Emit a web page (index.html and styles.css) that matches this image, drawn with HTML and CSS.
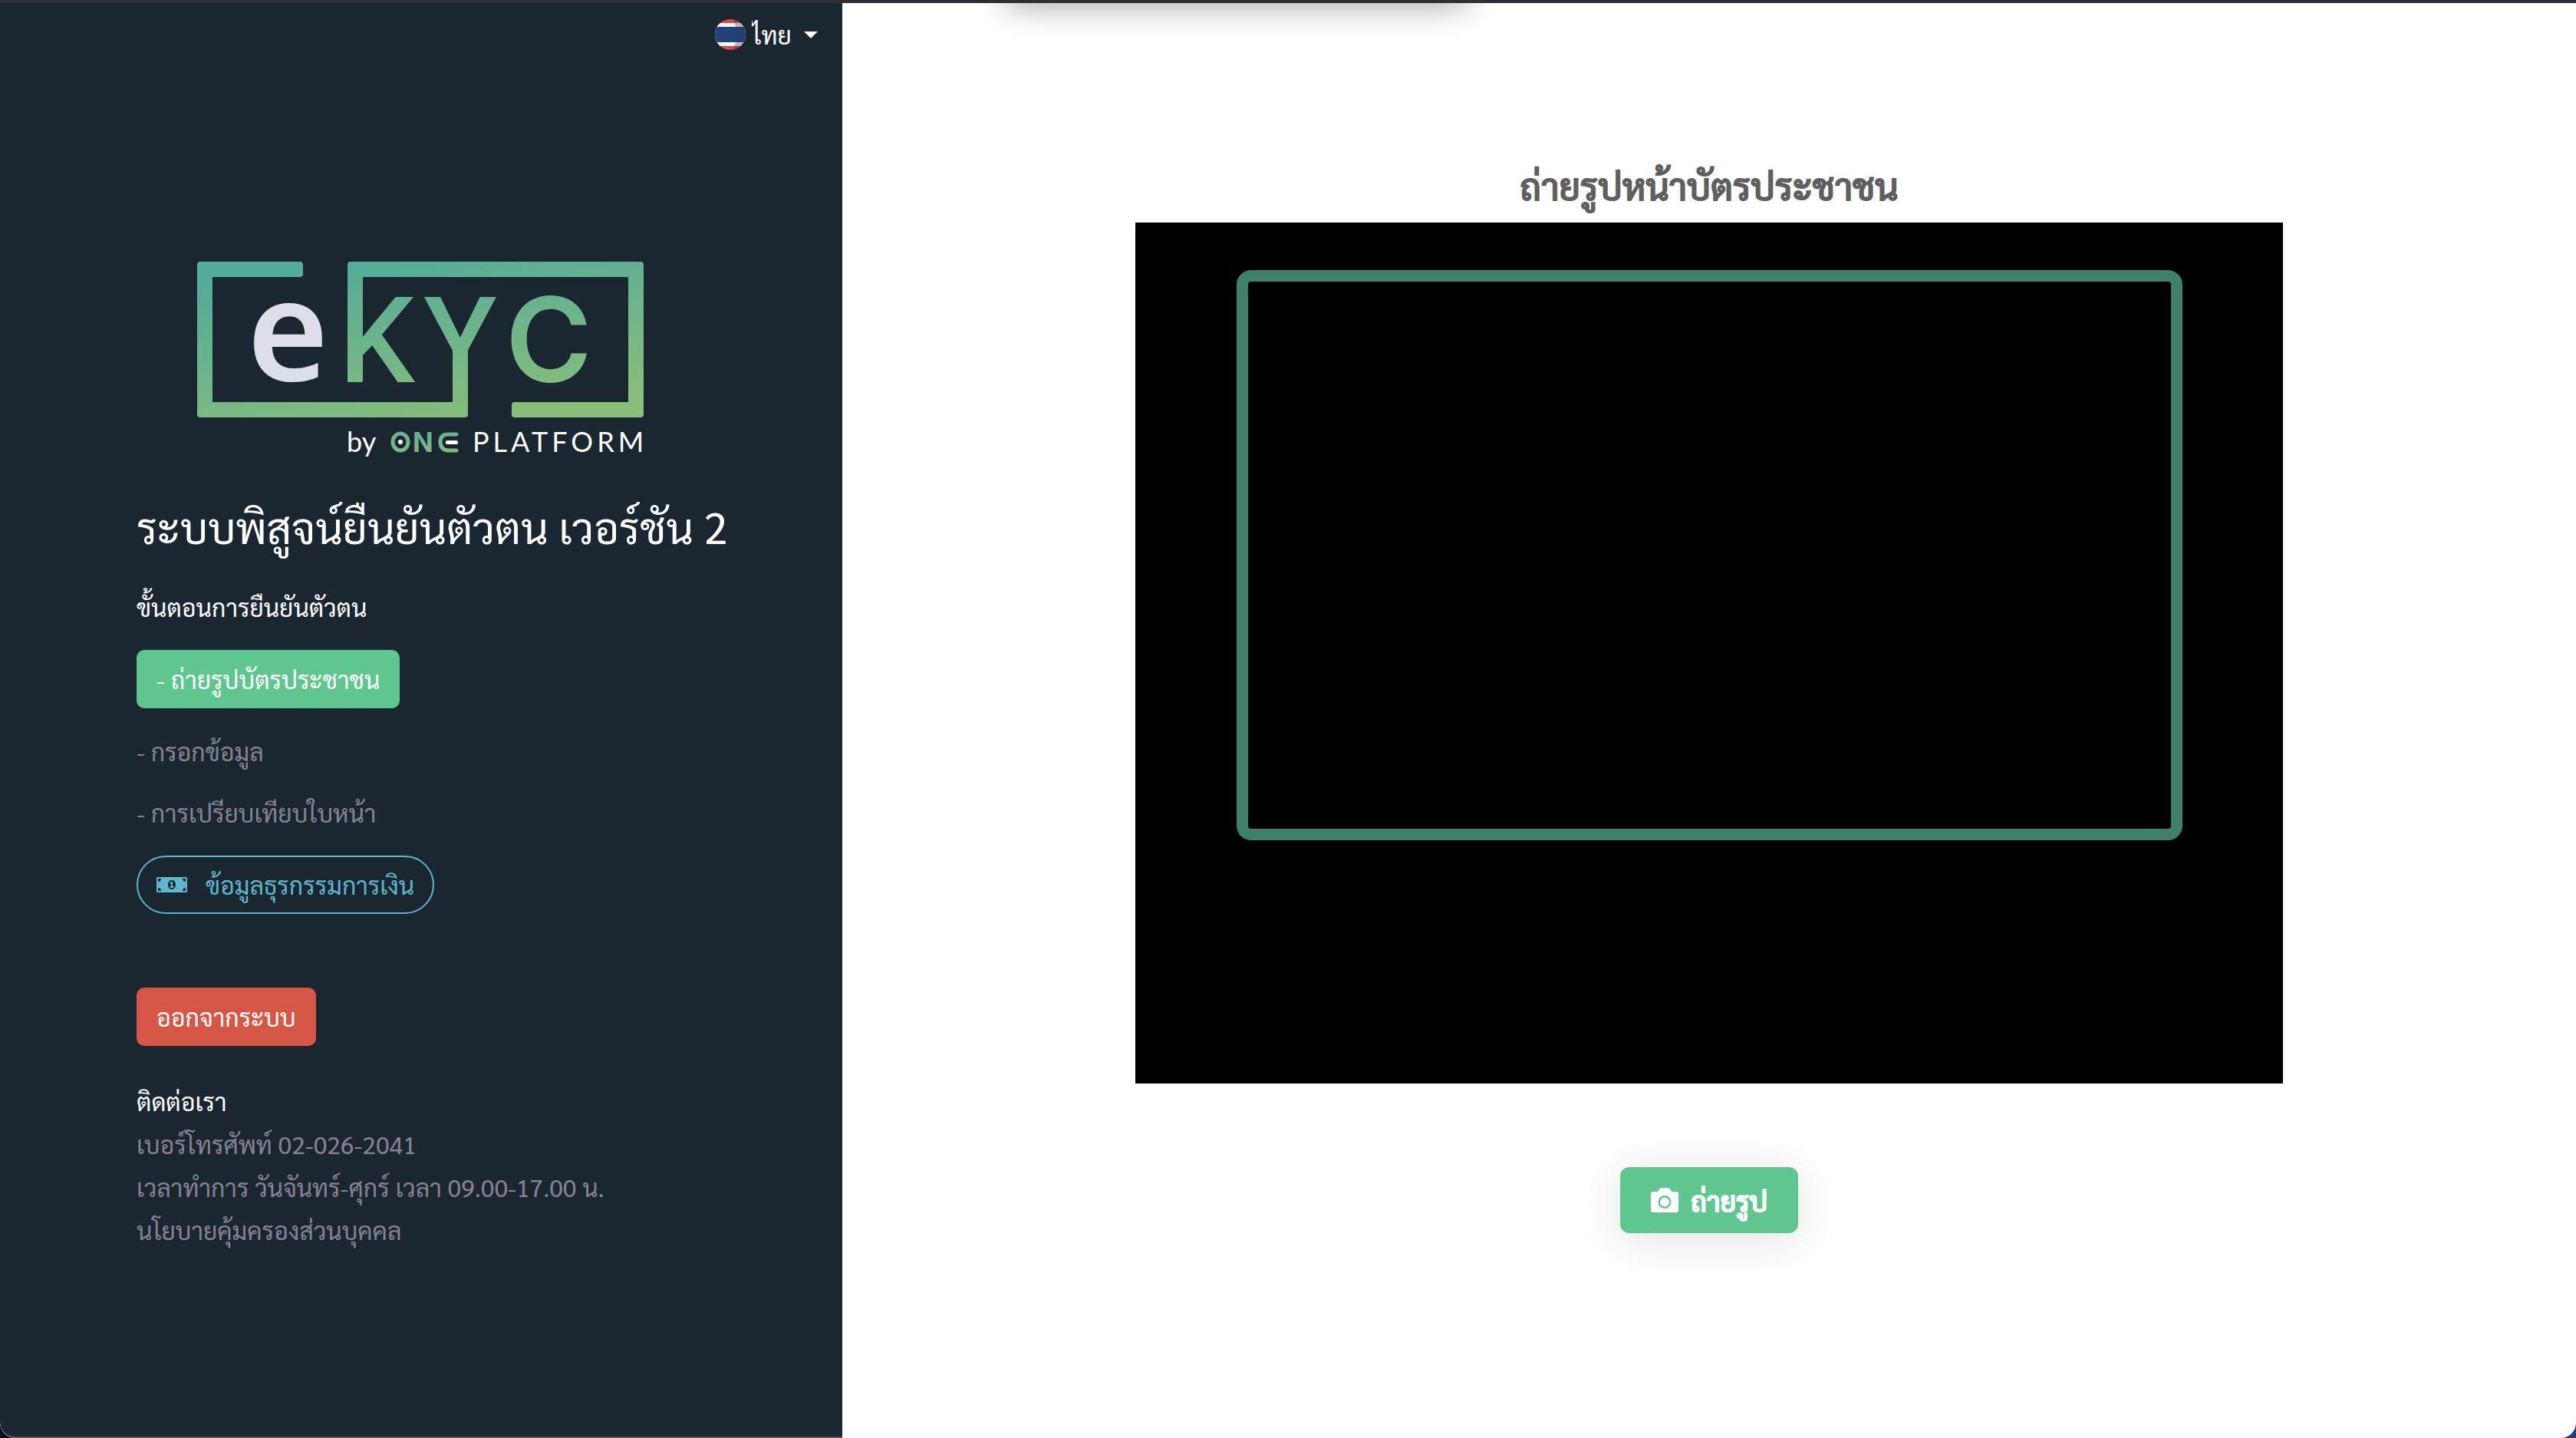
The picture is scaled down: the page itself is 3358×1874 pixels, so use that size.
FILE: index.html
```
<!DOCTYPE html>
<html lang="th">
<head>
<meta charset="utf-8">
<meta name="viewport" content="width=device-width, initial-scale=1">
<title>eKYC by ONE PLATFORM</title>
<link rel="stylesheet" href="styles.css">
</head>
<body>
<div class="window">
  <aside class="sidebar">
    <div class="language">
      <svg class="flag" viewBox="0 0 40 40" aria-hidden="true">
        <clipPath id="flag-clip"><circle cx="20" cy="20" r="20"/></clipPath>
        <g clip-path="url(#flag-clip)">
          <rect width="40" height="40" fill="#d84b3e"/>
          <rect y="5" width="40" height="30" fill="#f4f4f6"/>
          <rect y="10" width="40" height="20" fill="#22437c"/>
          <path d="M23 0Q28 8 28 20T23 40H40V0Z" fill="#2b3656" opacity=".3"/>
        </g>
      </svg>
      <select class="language-select" aria-label="ภาษา"><option>ไทย</option></select>
      <svg class="caret" viewBox="0 0 18 9" aria-hidden="true"><path d="M0 0H18L9 9Z"/></svg>
    </div>

    <svg class="logo" viewBox="257 341 584 258" role="img" aria-label="eKYC by ONE PLATFORM">
      <defs>
        <linearGradient id="brand" gradientUnits="userSpaceOnUse" x1="520" y1="325" x2="560" y2="560">
          <stop offset="0" stop-color="#52ab9b"/><stop offset="1" stop-color="#88be79"/>
        </linearGradient>
        <linearGradient id="brand-small" gradientUnits="userSpaceOnUse" x1="0" y1="563" x2="0" y2="589">
          <stop offset="0" stop-color="#68b092"/><stop offset="1" stop-color="#7db983"/>
        </linearGradient>
      </defs>
      <g fill="url(#brand)">
        <path d="M261 341H391Q395 341 395 345V357Q395 361 391 361H277V524H590V440H610V540Q610 544 606 544H261Q257 544 257 540V345Q257 341 261 341Z"/>
        <path d="M457 341H835Q839 341 839 345V540Q839 544 835 544H671Q667 544 667 540V528Q667 524 671 524H819V361H473V494Q473 498 469 498H457Q453 498 453 494V345Q453 341 457 341Z"/>
        <g class="logo-letters"><text x="442" y="498">K</text><text x="600" y="498" text-anchor="middle">Y</text></g>
        <text class="logo-c" x="659" y="498">C</text>
      </g>
      <text class="logo-e" x="322" y="496">e</text>
      <text class="logo-small" x="452" y="589">by</text>
      <g fill="none" stroke="url(#brand-small)" stroke-width="5">
        <ellipse cx="522" cy="576" rx="10" ry="11"/>
        <path d="M595 566H584Q574 566 574 576T584 587H595" stroke-linecap="round"/>
      </g>
      <text class="logo-n" x="538" y="589" fill="url(#brand-small)">N</text>
      <circle cx="522" cy="576" r="3" fill="#fff"/>
      <rect x="581" y="574" width="16" height="5" rx="2" fill="#fff"/>
      <text class="logo-small logo-platform" x="616" y="589">PLATFORM</text>
    </svg>

    <h1 class="title">ระบบพิสูจน์ยืนยันตัวตน เวอร์ชัน 2</h1>
    <div class="steps">
      <p>ขั้นตอนการยืนยันตัวตน</p>
      <button class="btn btn-green" type="button">- ถ่ายรูปบัตรประชาชน</button>
      <p class="muted">- กรอกข้อมูล</p>
      <p class="muted">- การเปรียบเทียบใบหน้า</p>
      <button class="btn btn-outline" type="button">
        <svg class="money" viewBox="0 0 40 20" aria-hidden="true">
          <path fill-rule="evenodd" d="M1.500 0H38.500Q40 0 40 1.500V18.500Q40 20 38.500 20H1.500Q0 20 0 18.500V1.500Q0 0 1.500 0ZM2 2V6Q6 6 6 2ZM38 2H34Q34 6 38 6ZM2 18H6Q6 14 2 14ZM38 18V14Q34 14 34 18ZM20 4C17 4 15 6.500 15 10S17 16 20 16S25 13.500 25 10S23 4 20 4ZM19 6H21V12H22.500V14H17.500V12H19V8.500H17.500V7Z"/>
        </svg>
        <span>ข้อมูลธุรกรรมการเงิน</span>
      </button>
    </div>
    <button class="btn btn-red" type="button">ออกจากระบบ</button>
    <address class="contact">
      <strong>ติดต่อเรา</strong>
      <span>เบอร์โทรศัพท์ 02-026-2041</span>
      <span>เวลาทำการ วันจันทร์-ศุกร์ เวลา 09.00-17.00 น.</span>
      <a href="#privacy">นโยบายคุ้มครองส่วนบุคคล</a>
    </address>
  </aside>

  <main class="capture">
    <h2 class="capture-title">ถ่ายรูปหน้าบัตรประชาชน</h2>
    <div class="camera"><div class="card-frame"></div></div>
    <button class="btn-shoot" type="button">
      <svg class="camera-icon" viewBox="0 0 36 32" aria-hidden="true">
        <path fill-rule="evenodd" d="M3 5H9L11 1.500Q12 0 14 0H22Q24 0 25 1.500L27 5H33Q36 5 36 8V29Q36 32 33 32H3Q0 32 0 29V8Q0 5 3 5ZM18 10A8.500 8.500 0 1 0 18 27A8.500 8.500 0 1 0 18 10ZM18 12.500A6 6 0 1 1 18 24.500A6 6 0 1 1 18 12.500Z"/>
      </svg>
      <span>ถ่ายรูป</span>
    </button>
  </main>
</div>
</body>
</html>
```
FILE: styles.css
```
* { box-sizing: border-box; }

body {
  margin: 0;
  background: linear-gradient(90deg, #0b0820 50%, #1f3f87 50%);
  color: #fff;
  font: 32px/48px Sarabun, "Noto Sans", sans-serif;
}

h1, h2, p { margin: 0; }
button, select { font: inherit; color: inherit; }

.window {
  display: flex;
  min-height: 100vh;
  border-top: 4px solid #2f2f33;
  border-radius: 0 0 20px 20px;
  background: #fff;
  overflow: hidden;
}

.sidebar {
  display: flex;
  flex: 0 0 32.7%;
  flex-direction: column;
  align-items: flex-start;
  padding: 17px 32px 48px 178px;
  border-bottom: 2px solid #4a5560;
  border-bottom-left-radius: 20px;
  background: #1a2731;
}

.language {
  display: flex;
  align-items: center;
  align-self: flex-end;
  gap: 8px;
}
.flag { width: 40px; height: 40px; }
.language-select {
  width: 60px;
  height: 48px;
  padding: 0;
  border: 0;
  background: none;
  appearance: none;
}
.language-select option { color: #1a2731; }
.caret { width: 18px; height: 9px; fill: #fff; }

.logo {
  width: 584px;
  height: 258px;
  margin: 272px 0 54px 79px;
  overflow: visible;
}
.logo-letters { font: 500 156px Roboto, sans-serif; }
.logo-c { font: 600 153px Inter, sans-serif; }
.logo-e { font: 600 182px "Noto Sans", sans-serif; fill: #dddfe8; }
.logo-small { font: 36px Lato, sans-serif; fill: #fff; }
.logo-n { font: 700 35px Inter, sans-serif; }
.logo-platform { letter-spacing: 5px; }

.title {
  margin-bottom: 48px;
  font-size: 56px;
  font-weight: 400;
  line-height: 66px;
}

.steps {
  display: flex;
  flex-direction: column;
  align-items: flex-start;
  gap: 32px;
}
.muted { color: #868293; }

.btn {
  display: flex;
  align-items: center;
  padding: 12px 24px;
  border: 2px solid;
  border-radius: 10px;
}
.btn-green { border-color: #60c68f; background: #60c68f; }
.btn-red { margin: 96px 0 44px; border-color: #d65745; background: #d65745; }
.btn-outline {
  gap: 24px;
  border-color: #5fb5ca;
  border-radius: 38px;
  background: none;
  color: #5fb5ca;
}
.money { width: 40px; height: 20px; fill: #5fb5ca; }

.contact {
  display: flex;
  flex-direction: column;
  color: #868293;
  font-style: normal;
  line-height: 56px;
}
.contact strong { color: #fff; font-weight: 400; }
.contact a { color: inherit; text-decoration: none; }

.capture {
  position: relative;
  display: flex;
  flex: 1;
  flex-direction: column;
  align-items: center;
  padding: 201px 0 48px;
  overflow: hidden;
}
/* shadow cast by the panel above the page */
.capture::before {
  content: "";
  position: absolute;
  top: -40px;
  left: 212px;
  width: 604px;
  height: 40px;
  border-radius: 12px;
  box-shadow: 0 4px 40px rgba(0, 0, 0, .35);
}
.capture-title {
  margin-bottom: 13px;
  color: #5f5f5f;
  font-size: 48px;
  font-weight: 400;
  line-height: 72px;
  -webkit-text-stroke: 2px #5f5f5f;
}
.camera {
  width: 66.2%;
  aspect-ratio: 4 / 3;
  padding: 62px 131px 0 132px;
  background: #000;
}
.card-frame {
  aspect-ratio: 1233 / 743;
  border: 15px solid #3d816a;
  border-radius: 19px;
}
.btn-shoot {
  display: flex;
  align-items: center;
  gap: 16px;
  margin-top: 109px;
  padding: 16px 40px;
  border: 0;
  border-radius: 12px;
  background: #60c68f;
  box-shadow: 0 8px 60px rgba(0, 0, 0, .12);
  font-size: 36px;
  font-weight: 400;
  line-height: 54px;
  -webkit-text-stroke: 2px #fff;
}
.camera-icon { width: 36px; height: 32px; fill: #fff; }
```
